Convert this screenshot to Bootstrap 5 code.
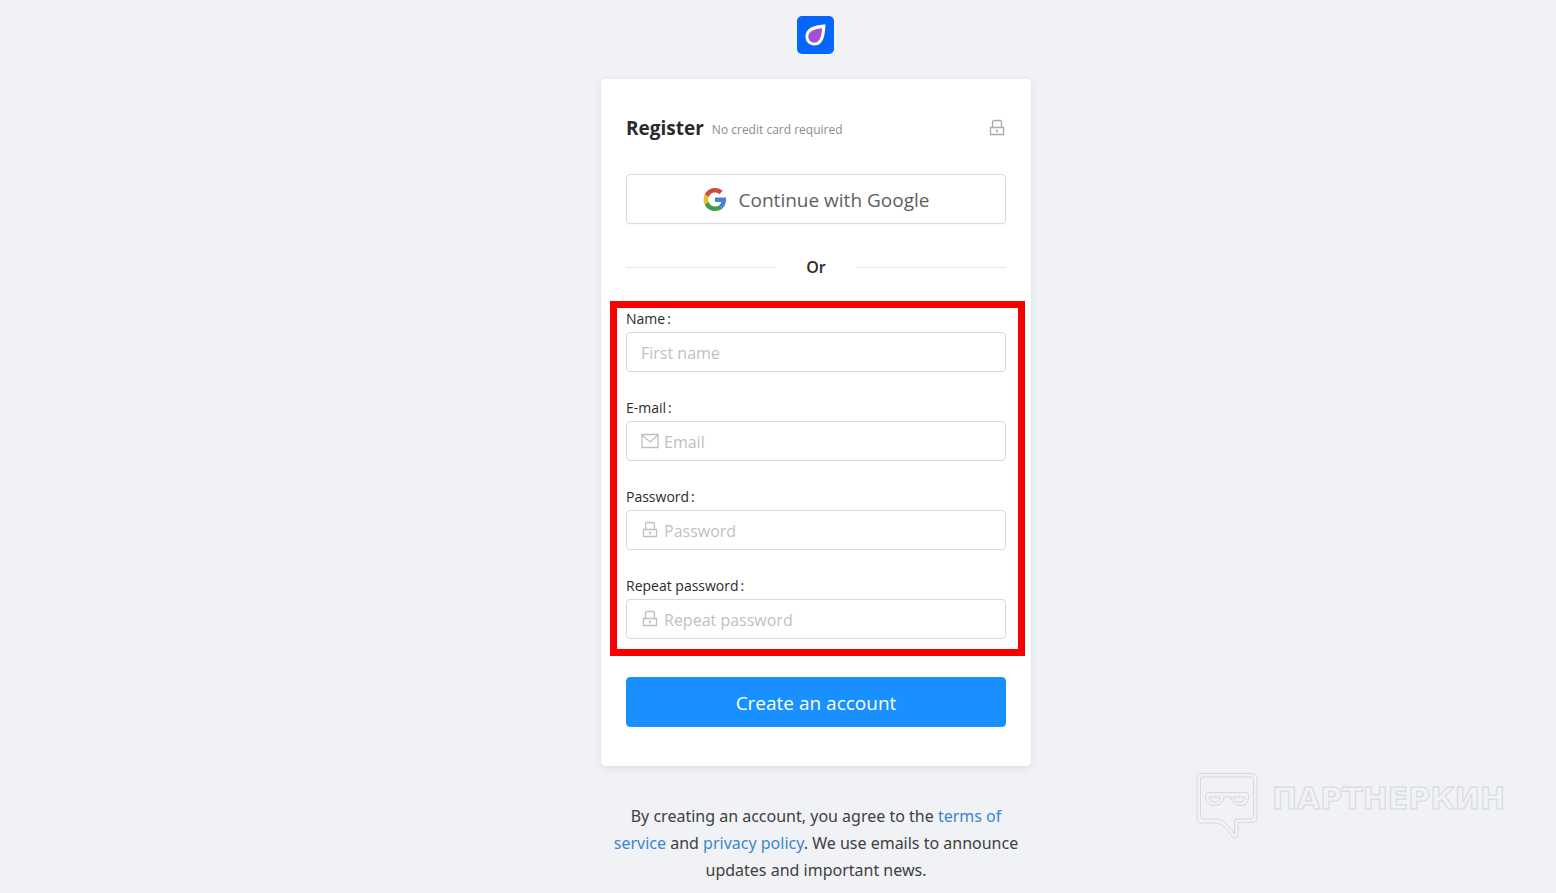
<!DOCTYPE html>
<html lang="en">
<head>
<meta charset="utf-8">
<meta name="viewport" content="width=device-width, initial-scale=1">
<title>Register</title>
<link href="https://cdn.jsdelivr.net/npm/bootstrap@5.3.0/dist/css/bootstrap.min.css" rel="stylesheet">
<style>
  body { background: #f0f2f5; color: #2b2b2b; font-family: "Open Sans", "Noto Sans", sans-serif; font-size: 16px; }
  .page-shell { padding: 16px 0 8px 76px; }
  .brand-link { height: 38px; margin-bottom: 25px; }
  .signup { width: 100%; max-width: 430px; }
  .signup-card { border: 0; border-radius: 5px; padding: 36px 25px 39px; box-shadow: 0 2px 8px rgba(0,0,0,.09); }
  .signup-head { height: 26px; margin-bottom: 33px; color: #aaa; }
  .signup-head h1 { font-size: 19px; line-height: 26px; font-weight: 700; color: #2b2b2b; }
  .signup-head span { font-size: 12px; color: #8c8c8c; }
  .btn-tall { height: 50px; border-radius: 4px; padding: 7px 12px 5px; font-size: 19px; }
  .btn-google { background: #fff; border: 1px solid #d9d9d9; color: #5f5f5f; box-shadow: 0 2px 0 rgba(0,0,0,.02); }
  .btn-create { background: #1890ff; border-color: #1890ff; color: #fff; }
  .or-line { height: 26px; margin: 30px 0 21px; gap: 30px; font-size: 16px; font-weight: 600; }
  .or-line::before, .or-line::after { content: ""; flex: 1; border-top: 1px solid #e8e8e8; }
  .fields { border: 7px solid #f80000; margin: 0 -19px 21px -16px; padding: 2px 12px 10px 9px; gap: 27px; }
  .fields label { font-size: 14px; line-height: 18px; height: 22px; display: block; }
  .fields label span { margin-left: 2px; }
  .field-box { height: 40px; border: 1px solid #d9d9d9; border-radius: 4px; padding: 0 14px; gap: 5px; color: #bfbfbf; background: #fff; }
  .field-box input { border: 0; outline: 0; padding: 2px 0 0; width: 100%; background: transparent; font-size: 16px; color: #2b2b2b; }
  .field-box input::placeholder { color: #bfbfbf; opacity: 1; }
  .field-box:focus-within { border-color: #1890ff; }
  .legal { margin: 37px 0 0; padding: 0 5px; font-family: "Noto Sans", sans-serif; line-height: 27px; color: #404040; }
  .legal a { color: #3a87d0; text-decoration: none; }
  .watermark { position: absolute; right: 51px; bottom: 52px; gap: 14px; color: #d7d8da; pointer-events: none; }
  .watermark span { font-family: "DejaVu Sans", sans-serif; font-weight: 700; font-size: 30px; line-height: 51px; color: #f0f2f5; -webkit-text-stroke: 1px #d7d8da; }
</style>
</head>
<body class="position-relative">
<svg class="d-none">
  <symbol id="lock" viewBox="0 0 18 18"><path d="M2.500 8.500h13v7h-13zM4.500 8.500V3.500q0-2 2-2h5q2 0 2 2v5M9 11v2.500M8 11.500h2" fill="none" stroke="currentColor" stroke-width="1.300"/></symbol>
  <symbol id="mail" viewBox="0 0 18 18"><path d="M1 2.500h16v13H1zM1 3l8 7 8-7" fill="none" stroke="currentColor" stroke-width="1.300"/></symbol>
</svg>
<main class="page-shell d-flex flex-column align-items-center">
  <a href="#" class="brand-link d-block" aria-label="Home">
    <svg class="d-block" width="38" height="38" viewBox="0 0 38 38"><rect width="37" height="38" rx="5" fill="#0666fb"/><path d="M28.500 8.500C19 9 8.500 11 8.500 20.500c0 5.500 4 9 8.700 9C27 29.500 28 18 28.500 8.500z" fill="#fff"/><path d="M25 12.300C18 13 11.300 15 11.300 20.500c0 3.800 2.800 6.200 6 6.200 5.600 0 7.500-7.400 7.700-14.400z" fill="#a251d6"/></svg>
  </a>
  <div class="signup">
    <div class="card signup-card">
      <div class="signup-head d-flex align-items-center">
        <h1 class="mb-0 me-2">Register</h1><span class="pt-1">No credit card required</span>
        <svg class="ms-auto" width="18" height="18"><use href="#lock"/></svg>
      </div>
      <button type="button" class="btn btn-google btn-tall w-100 d-flex align-items-center justify-content-center">
        <svg class="me-2" width="24" height="24" viewBox="-1 0 50 50"><path fill="#ce4a3e" d="M24 9.500c3.500 0 6.700 1.200 9.200 3.600l6.900-6.900C35.900 2.400 30.500 0 24 0 14.600 0 6.500 5.400 2.600 13.200l8 6.200C12.400 13.700 17.700 9.500 24 9.500z"/><path fill="#4a80d6" d="M47 24.600c0-1.600-.2-3.100-.4-4.600H24v9h12.900c-.6 3-2.300 5.500-4.800 7.200l7.700 6C44.400 38 47 31.800 47 24.600z"/><path fill="#f2bd24" d="M10.500 28.600c-.5-1.500-.8-3-.8-4.600s.3-3.100.8-4.600l-8-6.200C.9 16.500 0 20.100 0 24s.9 7.500 2.600 10.800z"/><path fill="#419c51" d="M24 48c6.500 0 11.900-2.100 15.900-5.800l-7.700-6c-2.200 1.500-4.900 2.300-8.200 2.300-6.300 0-11.600-4.200-13.500-9.900l-8 6.200C6.500 42.600 14.600 48 24 48z"/></svg>
        <span class="ms-1">Continue with Google</span>
      </button>
      <div class="or-line d-flex align-items-center">Or</div>
      <form>
        <div class="fields d-flex flex-column">
          <div><label for="name">Name<span>:</span></label>
            <div class="field-box d-flex align-items-center"><input id="name" type="text" placeholder="First name"></div></div>
          <div><label for="email">E-mail<span>:</span></label>
            <div class="field-box d-flex align-items-center"><svg class="flex-shrink-0" width="18" height="18"><use href="#mail"/></svg><input id="email" type="email" placeholder="Email"></div></div>
          <div><label for="pass">Password<span>:</span></label>
            <div class="field-box d-flex align-items-center"><svg class="flex-shrink-0" width="18" height="18"><use href="#lock"/></svg><input id="pass" type="password" placeholder="Password"></div></div>
          <div><label for="pass2">Repeat password<span>:</span></label>
            <div class="field-box d-flex align-items-center"><svg class="flex-shrink-0" width="18" height="18"><use href="#lock"/></svg><input id="pass2" type="password" placeholder="Repeat password"></div></div>
        </div>
        <button type="submit" class="btn btn-create btn-tall w-100">Create an account</button>
      </form>
    </div>
    <p class="legal text-center">By creating an account, you agree to the <a href="#">terms of service</a> and <a href="#">privacy policy</a>. We use emails to announce updates and important news.</p>
  </div>
</main>
<div class="watermark d-flex align-items-start">
  <svg width="62" height="67" viewBox="0 0 62 67" fill="none" stroke="currentColor"><path d="M6 .5h50q5 0 5 5v39q0 5-5 5H42v13q-1 4-5 2C30 56 27 50 19 50H6q-5 0-5-5V5.500q0-5 5-5z"/><path d="M7 4h48q2.500 0 2.500 2.500v37q0 2.500-2.500 2.500H41q-2.500 0-2.500 3v12C32 52 27 46 20 46H7q-2.500 0-2.500-2.500v-37Q4.500 4 7 4z"/><path d="M12 19.500h38q2.500 0 2.500 3v2q0 8-8 8-8 0-9.500-8.500h-7q-1 8.500-9.500 8.500-9 0-9-8v-2q0-3 2.500-3z"/><path d="M13.500 24H24q0 5-5 5-5.500 0-5.500-5zM37.500 24H49q0 5-5.500 5-6 0-6-5z"/></svg>
  <span>ПАРТНЕРКИН</span>
</div>
<script src="https://cdn.jsdelivr.net/npm/bootstrap@5.3.0/dist/js/bootstrap.bundle.min.js"></script>
</body>
</html>
